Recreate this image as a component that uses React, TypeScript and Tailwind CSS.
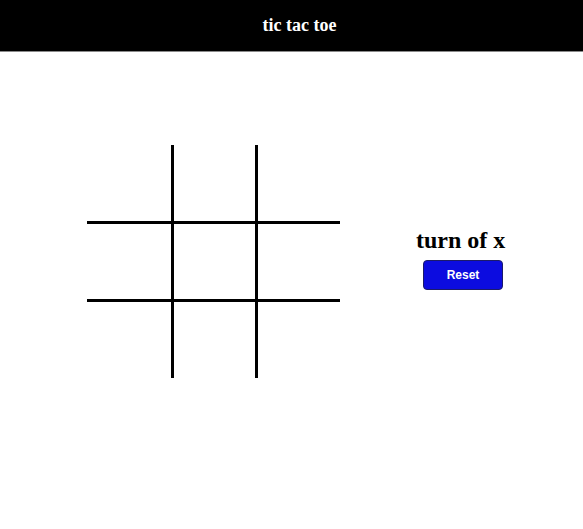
import React, { useState } from "react";

export default function App() {
  const [cells, setCells] = useState<string[]>(Array(9).fill(""));
  const [turn, setTurn] = useState("x");
  const cols = ["w-[84px]", "w-[81px]", "w-[82px]"];
  const rows = ["h-[76px]", "h-[75px]", "h-[76px]"];
  return (
    <div className="min-h-[529px] bg-white" style={{ fontFamily: '"Liberation Serif", "Times New Roman", serif' }}>
      <header className="h-[52px] bg-black border-b border-[#8a8a8a] flex items-center justify-center">
        <h1 className="text-white font-bold text-[18px] leading-none ml-[16px] mt-[-2px]">tic tac toe</h1>
      </header>
      <main className="flex items-start pt-[93px] pl-[87px]">
        <div className="grid grid-cols-[84px_81px_82px] gap-[3px] bg-black">
          {cells.map((v, i) => (
            <div
              key={i}
              onClick={() => {
                if (v) return;
                const n = [...cells];
                n[i] = turn;
                setCells(n);
                setTurn(turn === "x" ? "o" : "x");
              }}
              className={`${cols[i % 3]} ${rows[Math.floor(i / 3)]} bg-white flex items-center justify-center text-[40px] font-bold`}
            >
              {v}
            </div>
          ))}
        </div>
        <div className="ml-[76px] mt-[81px] flex flex-col items-start">
          <h2 className="text-[24px] leading-[28px] font-bold text-black">turn of {turn}</h2>
          <button
            onClick={() => {
              setCells(Array(9).fill(""));
              setTurn("x");
            }}
            className="mt-[6px] ml-[7px] w-[80px] h-[30px] rounded-[4px] bg-[#0c0ce0] border border-[#1b1b6a] text-white text-[12px] font-bold"
            style={{ fontFamily: '"Liberation Sans", Arial, sans-serif' }}
          >
            Reset
          </button>
        </div>
      </main>
    </div>
  );
}
